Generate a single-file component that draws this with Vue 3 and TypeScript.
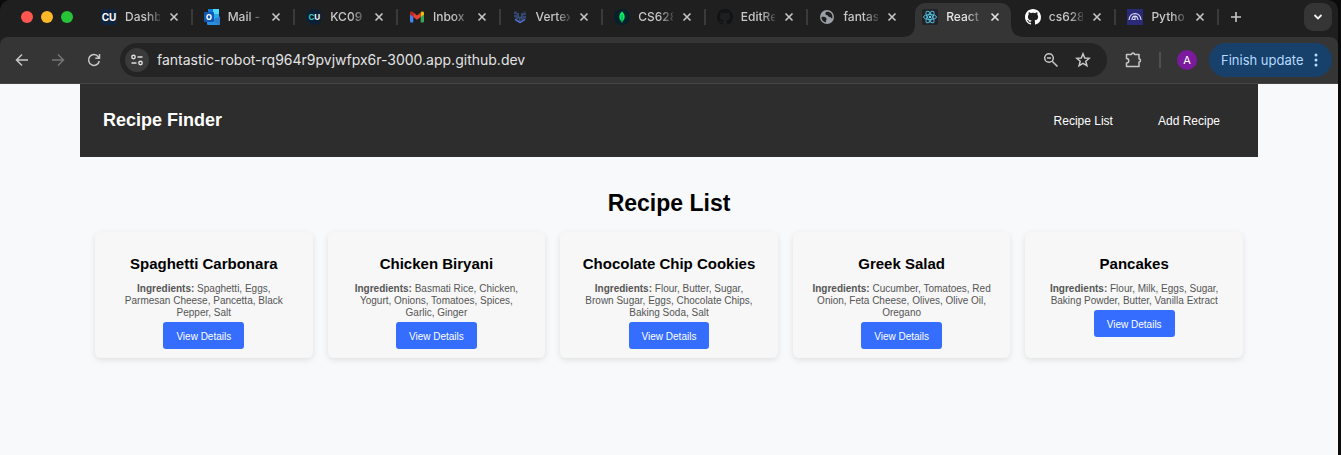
<script setup lang="ts">
import { ref } from 'vue'

interface Tab {
  icon: string
  title: string
  divided: boolean
}

interface Recipe {
  name: string
  ingredients: string[]
}

const tabs: Tab[] = [
  { icon: 'cu-square', title: 'Dashb', divided: true },
  { icon: 'outlook', title: 'Mail -', divided: true },
  { icon: 'cu-round', title: 'KC09', divided: true },
  { icon: 'gmail', title: 'Inbox', divided: true },
  { icon: 'vertex', title: 'Vertex', divided: true },
  { icon: 'mongo', title: 'CS628', divided: true },
  { icon: 'github-dark', title: 'EditRe', divided: true },
  { icon: 'globe', title: 'fantas', divided: false },
  { icon: 'react', title: 'React', divided: false },
  { icon: 'github', title: 'cs628', divided: true },
  { icon: 'python', title: 'Pytho', divided: true },
]
const activeTab = ref(8)
const address = ref('fantastic-robot-rq964r9pvjwfpx6r-3000.app.github.dev')

const recipes: Recipe[] = [
  { name: 'Spaghetti Carbonara', ingredients: ['Spaghetti, Eggs,', 'Parmesan Cheese, Pancetta, Black', 'Pepper, Salt'] },
  { name: 'Chicken Biryani', ingredients: ['Basmati Rice, Chicken,', 'Yogurt, Onions, Tomatoes, Spices,', 'Garlic, Ginger'] },
  { name: 'Chocolate Chip Cookies', ingredients: ['Flour, Butter, Sugar,', 'Brown Sugar, Eggs, Chocolate Chips,', 'Baking Soda, Salt'] },
  { name: 'Greek Salad', ingredients: ['Cucumber, Tomatoes, Red', 'Onion, Feta Cheese, Olives, Olive Oil,', 'Oregano'] },
  { name: 'Pancakes', ingredients: ['Flour, Milk, Eggs, Sugar,', 'Baking Powder, Butter, Vanilla Extract'] },
]
</script>

<template>
  <div class="desktop">
    <div class="window">
      <div class="tab-strip">
        <div class="lights">
          <button class="light red" aria-label="Close window"></button>
          <button class="light yellow" aria-label="Minimize window"></button>
          <button class="light green" aria-label="Zoom window"></button>
        </div>
        <div class="tabs">
          <div
            v-for="(tab, i) in tabs"
            :key="i"
            class="tab"
            :class="{ active: i === activeTab, divided: tab.divided }"
          >
            <button class="tab-main" @click="activeTab = i">
              <span v-if="tab.icon === 'cu-square'" class="favicon cu">CU</span>
              <span v-else-if="tab.icon === 'cu-round'" class="favicon cu round"><i>C</i>U</span>
              <svg v-else-if="tab.icon === 'outlook'" class="favicon" viewBox="0 0 16 16">
                <rect x="4" y="0" width="11" height="10" rx="1" fill="#28a8ea" />
                <rect x="9" y="0" width="6" height="5" fill="#50d9ff" />
                <rect x="4" y="0" width="5" height="4" fill="#0f78d4" />
                <path d="M3 8 L9.500 11.500 L16 7.500 V15 a1 1 0 0 1-1 1 H4 a1 1 0 0 1-1-1z" fill="#2a8fe0" />
                <path d="M16 7.500 V15 a1 1 0 0 1-1 1 L8 11z" fill="#2f7fd0" />
                <rect x="0" y="3" width="10" height="10" rx="1" fill="#0f59b5" />
                <ellipse cx="5" cy="8" rx="2.100" ry="2.400" fill="none" stroke="#fff" stroke-width="1.400" />
              </svg>
              <svg v-else-if="tab.icon === 'gmail'" class="favicon" viewBox="0 0 16 16">
                <path d="M1 4 V12.500 a1 1 0 0 0 1 1 H4.300 V6.500z" fill="#4285f4" />
                <path d="M15 4 V12.500 a1 1 0 0 1-1 1 H11.700 V6.500z" fill="#34a853" />
                <path d="M11.700 3.800 V8 L15 5.500 V4 c0-1.500-1.600-2-2.600-1.200z" fill="#fbbc04" />
                <path d="M1 4 V5.500 L4.300 8 V3.800 L3.600 2.800 C2.600 2 1 2.500 1 4z" fill="#c5221f" />
                <path d="M4.300 3.600 V8 L8 10.700 L11.700 8 V3.600 L8 6.400z" fill="#ea4335" />
              </svg>
              <svg v-else-if="tab.icon === 'vertex'" class="favicon" viewBox="0 0 16 16" fill="none">
                <path d="M3.500 2.500 V9 L8 11.500 L12.500 9 V2.500" stroke="#31456f" stroke-width="3" stroke-dasharray="2.500 0.800" />
                <path d="M6 4 V8 L8 9 L10 8 V4" stroke="#3f5488" stroke-width="1.500" />
                <path d="M3 10.500 L8 13.500 L13 10.500" stroke="#5b7ce0" stroke-width="1.300" />
              </svg>
              <svg v-else-if="tab.icon === 'mongo'" class="favicon" viewBox="0 0 16 16">
                <circle cx="8" cy="8" r="8" fill="#06202b" />
                <path d="M8 2.500 C11.700 6 11.500 10 8 13 C4.500 10 4.300 6 8 2.500z" fill="#00ed64" />
                <path d="M8 6 V14" stroke="#0a8a50" />
              </svg>
              <svg
                v-else-if="tab.icon === 'github' || tab.icon === 'github-dark'"
                class="favicon"
                viewBox="0 0 16 16"
                :fill="tab.icon === 'github' ? '#ffffff' : '#111417'"
              >
                <path d="M8 0C3.580 0 0 3.580 0 8c0 3.540 2.290 6.530 5.470 7.590.4.070.550-.170.550-.380 0-.190-.010-.820-.010-1.490-2.010.370-2.530-.490-2.690-.940-.090-.230-.480-.940-.820-1.130-.280-.150-.680-.520-.010-.530.630-.010 1.080.580 1.230.820.720 1.210 1.870.870 2.330.660.070-.520.280-.870.510-1.070-1.780-.200-3.640-.890-3.640-3.950 0-.870.310-1.590.820-2.150-.080-.200-.360-1.020.080-2.120 0 0 .670-.210 2.200.820.640-.180 1.320-.270 2-.270s1.360.090 2 .270c1.530-1.040 2.200-.820 2.200-.820.440 1.100.160 1.920.080 2.120.510.560.820 1.270.820 2.150 0 3.070-1.870 3.750-3.650 3.950.290.250.540.730.540 1.480 0 1.070-.010 1.930-.010 2.200 0 .210.150.460.550.380A8.010 8.010 0 0 0 16 8c0-4.420-3.580-8-8-8z" />
              </svg>
              <svg v-else-if="tab.icon === 'globe'" class="favicon" viewBox="0 0 16 16">
                <circle cx="8" cy="8" r="7" fill="#9aa0a6" />
                <path d="M2.500 8 C4.500 7.500 7 8 7.500 9.500 C8 11 6.500 11 7 13.500 C4 13 2.300 10.500 2.500 8z" fill="#1f1f1f" />
                <path d="M7 3 C8.500 2.300 11 2.600 12.300 4.500 C13.500 6 13.600 8 13.200 9.500 C12 9.500 12 8 10.500 8 C9 8 9.500 6.500 8 6.300 C6 6 6 4 7 3z" fill="#1f1f1f" />
              </svg>
              <svg v-else-if="tab.icon === 'react'" class="favicon" viewBox="0 0 16 16" fill="none" stroke="#53b9d5">
                <rect width="16" height="16" rx="2" fill="#20232a" stroke="none" />
                <ellipse cx="8" cy="8" rx="6.500" ry="2.500" />
                <ellipse cx="8" cy="8" rx="6.500" ry="2.500" transform="rotate(60 8 8)" />
                <ellipse cx="8" cy="8" rx="6.500" ry="2.500" transform="rotate(120 8 8)" />
                <circle cx="8" cy="8" r="1.200" fill="#61dafb" stroke="none" />
              </svg>
              <svg v-else class="favicon" viewBox="0 0 16 16" fill="none">
                <rect width="16" height="16" fill="#2b2a78" />
                <path d="M2 11 C2.500 2.500 13.500 2.500 14 11 M5 11 C5 6 10.500 5.500 11 11 M8 7 V10.500 H6" stroke="#d8d9f5" stroke-width="1.200" />
              </svg>
              <span class="tab-title">{{ tab.title }}</span>
            </button>
            <button class="close" aria-label="Close tab">
              <svg width="10" height="10" viewBox="0 0 10 10"><path d="M1.500 1.500 L8.500 8.500 M8.500 1.500 L1.500 8.500" stroke="currentColor" stroke-width="1.600" /></svg>
            </button>
          </div>
        </div>
        <button class="new-tab" aria-label="New tab">
          <svg width="12" height="12" viewBox="0 0 12 12"><path d="M6 1 V11 M1 6 H11" stroke="currentColor" stroke-width="1.600" /></svg>
        </button>
        <button class="tab-search" aria-label="Search tabs">
          <svg width="10" height="10" viewBox="0 0 10 10"><path d="M1.500 3 L5 6.500 L8.500 3" fill="none" stroke="currentColor" stroke-width="1.800" /></svg>
        </button>
      </div>

      <div class="toolbar">
        <div class="nav-buttons">
          <button class="tool" aria-label="Back">
            <svg width="14" height="14" viewBox="0 0 14 14"><path d="M13 7 H2 M7 1.500 L1.500 7 L7 12.500" /></svg>
          </button>
          <button class="tool dim" aria-label="Forward">
            <svg width="14" height="14" viewBox="0 0 14 14"><path d="M1 7 H12 M7 1.500 L12.500 7 L7 12.500" /></svg>
          </button>
          <button class="tool" aria-label="Reload">
            <svg width="14" height="14" viewBox="0 0 14 14"><path d="M12.300 8 A5.400 5.400 0 1 1 11.300 3.700 L12.500 5 M12.500 1 V5.200 H8.300" /></svg>
          </button>
        </div>
        <div class="omnibox">
          <button class="site-info" aria-label="Site information">
            <svg width="14" height="14" viewBox="0 0 14 14" fill="none" stroke="currentColor" stroke-width="1.400">
              <circle cx="3.500" cy="4" r="1.700" /><path d="M7.500 4 H12.500 M1.500 10 H6.500" /><circle cx="10.500" cy="10" r="1.700" />
            </svg>
          </button>
          <input v-model="address" class="address" type="text" aria-label="Address" spellcheck="false" />
          <button class="box-tool" aria-label="Zoom">
            <svg width="16" height="16" viewBox="0 0 16 16"><circle cx="6" cy="6" r="4.300" /><path d="M9.200 9.200 L14.500 14.500 M4 6 H8" /></svg>
          </button>
          <button class="box-tool" aria-label="Bookmark this tab">
            <svg width="16" height="16" viewBox="0 0 16 16"><path d="M8 1.800 L9.700 6 L14.300 6.300 L10.800 9.200 L11.900 13.700 L8 11.300 L4.100 13.700 L5.200 9.200 L1.700 6.300 L6.300 6z" /></svg>
          </button>
        </div>
        <button class="tool extensions" aria-label="Extensions">
          <svg width="18" height="18" viewBox="0 0 18 18"><path d="M2.500 3.500 H7.500 C7.500 1.500 10.500 1.500 10.500 3.500 H15 V8 C17 8 17 11 15 11 V15.500 H2.500 V12 C5.500 12 5.500 7.500 2.500 7.500z" stroke-linejoin="round" /></svg>
        </button>
        <span class="rule"></span>
        <button class="avatar" aria-label="Profile">A</button>
        <button class="update">
          Finish update
          <svg width="4" height="16" viewBox="0 0 4 16" fill="currentColor"><circle cx="2" cy="3" r="1.500" /><circle cx="2" cy="8" r="1.500" /><circle cx="2" cy="13" r="1.500" /></svg>
        </button>
      </div>

      <div class="page">
        <header class="site-header">
          <h1>Recipe Finder</h1>
          <nav>
            <a href="#recipes">Recipe List</a>
            <a href="#add">Add Recipe</a>
          </nav>
        </header>
        <main id="recipes">
          <h2>Recipe List</h2>
          <div class="grid">
            <article v-for="recipe in recipes" :key="recipe.name" class="card">
              <h3>{{ recipe.name }}</h3>
              <p>
                <span v-for="(line, n) in recipe.ingredients" :key="n" class="line">
                  <strong v-if="n === 0">Ingredients:&nbsp;</strong><span>{{ line }}</span>
                </span>
              </p>
              <button>View Details</button>
            </article>
          </div>
        </main>
      </div>
    </div>
  </div>
</template>

<style>
body {
  background: #0b0b0b;
}
</style>

<style scoped>
* {
  box-sizing: border-box;
}
button {
  border: 0;
  padding: 0;
  background: none;
  color: inherit;
  font: inherit;
}
svg {
  display: block;
  flex: none;
}
.desktop {
  padding-right: 3px;
  background: #0b0b0b;
}
.window {
  display: flex;
  flex-direction: column;
  min-height: 100vh;
  background: #1f1f1f;
  border-radius: 10px 10px 0 0;
  overflow: hidden;
  font-family: Inter, Roboto, sans-serif;
}
.tab-strip {
  display: flex;
  align-items: center;
  height: 37px;
  padding: 0 6px 0 21px;
  color: #c7c7c7;
}
.lights {
  display: flex;
  flex: none;
  gap: 8px;
  width: 69px;
  margin-bottom: 3px;
}
.light {
  width: 12px;
  height: 12px;
  border-radius: 50%;
}
.red {
  background: #ff5650;
}
.yellow {
  background: #fdb827;
}
.green {
  background: #28c438;
}
.tabs {
  display: flex;
  flex: 1;
  min-width: 0;
  height: 100%;
  padding-top: 3px;
}
.tab {
  position: relative;
  display: flex;
  flex: 1 1 0;
  align-items: center;
  min-width: 0;
  padding: 0 11px 6px;
  font-size: 12px;
}
.divided::after {
  content: '';
  position: absolute;
  right: 0;
  top: 6px;
  width: 2px;
  height: 16px;
  background: #3a3a3a;
}
.tab-main {
  position: relative;
  display: flex;
  flex: 1;
  align-items: center;
  gap: 8px;
  min-width: 0;
  height: 28px;
  text-align: left;
}
.active {
  color: #e3e3e3;
}
.active::before {
  content: '';
  position: absolute;
  inset: 0 3px 0 4px;
  border-radius: 10px 10px 0 0;
  background: #353535;
}
.active::after {
  content: '';
  position: absolute;
  left: -6px;
  right: -7px;
  bottom: 0;
  height: 10px;
  background:
    radial-gradient(circle at 0 0, transparent 9px, #353535 10px) left / 10px 10px no-repeat,
    radial-gradient(circle at 100% 0, transparent 9px, #353535 10px) right / 10px 10px no-repeat;
}
.favicon {
  width: 16px;
  height: 16px;
  flex: none;
}
.cu {
  background: #10233f;
  color: #fff;
  font-size: 10px;
  font-weight: 700;
  line-height: 16px;
  text-align: center;
}
.round {
  border-radius: 50%;
  background: #0b2036;
  font-size: 8px;
}
.round i {
  color: #35c7b5;
  font-style: normal;
}
.tab-title {
  flex: 1;
  min-width: 0;
  white-space: nowrap;
  font-weight: 500;
  line-height: 20px;
  mask-image: linear-gradient(90deg, #000 60%, transparent 110%);
}
.close {
  position: relative;
  display: grid;
  flex: none;
  place-items: center;
  width: 16px;
  height: 16px;
  margin-left: 6px;
}
.new-tab {
  display: grid;
  flex: none;
  place-items: center;
  width: 28px;
  height: 28px;
  margin: 0 54px 4px 3px;
}
.tab-search {
  display: grid;
  flex: none;
  place-items: center;
  width: 28px;
  height: 28px;
  margin-bottom: 3px;
  border-radius: 9px;
  background: #353535;
  color: #f0f0f0;
}
.toolbar {
  display: flex;
  align-items: center;
  height: 47px;
  padding: 0 6px 1px 8px;
  border-bottom: 1px solid #454545;
  border-radius: 8px 8px 0 0;
  background: #353535;
  color: #c7c7c7;
}
.nav-buttons {
  display: flex;
  gap: 8px;
  margin-right: 12px;
}
.tool {
  display: grid;
  place-items: center;
  width: 28px;
  height: 28px;
}
.tool svg,
.box-tool svg {
  fill: none;
  stroke: currentColor;
  stroke-width: 1.5px;
}
.dim {
  color: #757575;
}
.omnibox {
  display: flex;
  flex: 1;
  align-items: center;
  height: 34px;
  padding: 0 16px 0 5px;
  border-radius: 17px;
  background: #242424;
}
.site-info {
  display: grid;
  place-items: center;
  width: 24px;
  height: 24px;
  border-radius: 50%;
  background: #3a3a3a;
  color: #e0e0e0;
}
.address {
  flex: 1;
  min-width: 0;
  margin-left: 8px;
  padding: 0;
  border: 0;
  outline: 0;
  background: none;
  color: #e3e3e3;
  font: 14px/20px Inter, Roboto, sans-serif;
}
.box-tool {
  margin-left: 16px;
}
.extensions {
  margin-left: 12px;
}
.rule {
  width: 2px;
  height: 16px;
  margin: 0 16px 0 12px;
  background: #505050;
}
.avatar {
  width: 20px;
  height: 20px;
  border-radius: 50%;
  background: #7b1a9c;
  color: #fff;
  font-size: 11px;
}
.update {
  display: flex;
  align-items: center;
  justify-content: space-between;
  width: 123px;
  height: 34px;
  margin-left: 12px;
  padding: 0 14px 0 12px;
  border-radius: 17px;
  background: #17406b;
  color: #b5dbff;
  font-size: 13px;
  white-space: nowrap;
}
.page {
  flex: 1;
  padding: 0 80px;
  background: #f7f9fb;
  font-family: 'Liberation Sans', Arial, sans-serif;
}
.site-header {
  display: flex;
  align-items: center;
  justify-content: space-between;
  height: 73px;
  padding: 0 38px 0 23px;
  background: #2d2d2d;
  color: #fff;
}
h1 {
  margin: 0;
  padding-bottom: 2px;
  font-size: 18px;
  line-height: 20px;
}
nav {
  display: flex;
  gap: 45px;
}
nav a {
  color: #fff;
  font-size: 12px;
  line-height: 16px;
  text-decoration: none;
}
main {
  padding: 33px 15px;
}
h2 {
  margin: 0 0 15px;
  font-size: 23px;
  line-height: 27px;
  color: #000;
  text-align: center;
}
.grid {
  display: grid;
  grid-template-columns: repeat(5, 1fr);
  gap: 15px;
}
.card {
  padding: 23px 15px 9px;
  border-radius: 6px;
  background: #f7f7f7;
  box-shadow: 0 2px 6px rgba(0, 0, 0, 0.1);
  text-align: center;
}
.card h3 {
  margin: 0 0 10px;
  font-size: 15px;
  line-height: 18px;
  color: #000;
}
.card p {
  margin: 0 0 3px;
  font-size: 10px;
  line-height: 12px;
  color: #555;
}
.line {
  display: block;
}
.card button {
  padding: 2px 13px 0;
  border-radius: 3px;
  background: #356dff;
  color: #fff;
  font-size: 10px;
  line-height: 25px;
}
</style>
